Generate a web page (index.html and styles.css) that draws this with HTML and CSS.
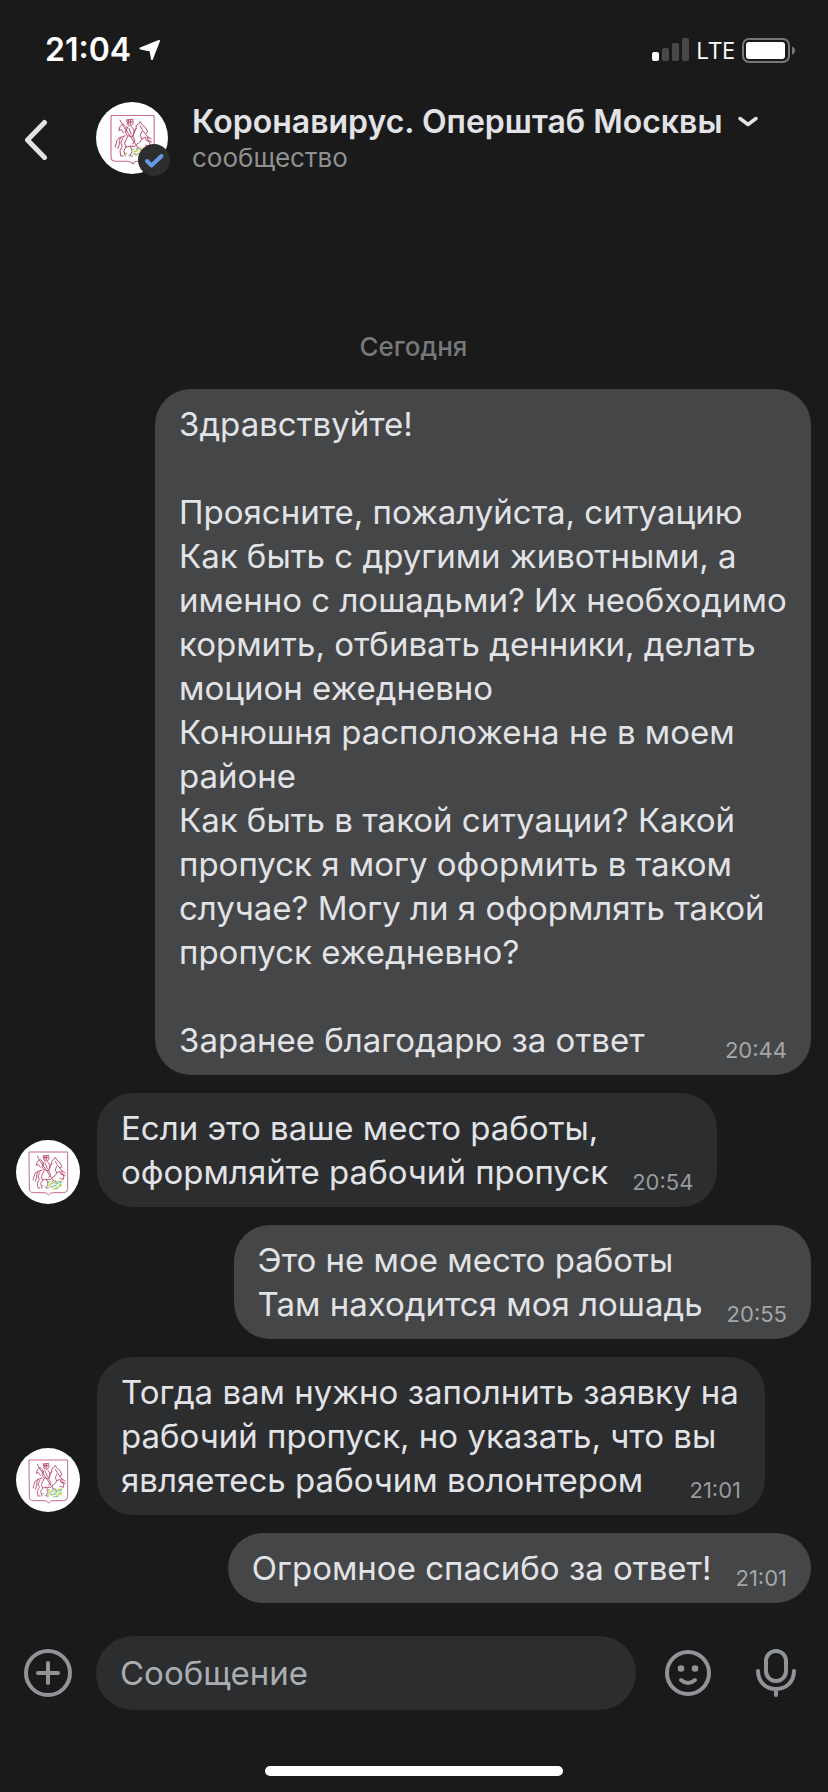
FILE: index.html
```html
<!DOCTYPE html>
<html lang="ru">
<head>
<meta charset="utf-8">
<meta name="viewport" content="width=device-width, initial-scale=1">
<title>Коронавирус. Оперштаб Москвы</title>
<link rel="stylesheet" href="styles.css">
</head>
<body>
<svg class="defs" aria-hidden="true">
  <symbol id="crest" viewBox="0 0 192 192">
    <circle cx="96" cy="96" r="96" fill="#fff"/>
    <g fill="none" stroke="#b8476f" stroke-width="2.6" stroke-linecap="round" stroke-linejoin="round">
      <path stroke="#c66a8c" stroke-width="3" d="M40 36H155V146Q155 158 143 158H112Q102 158 98 165Q93 158 84 158H52Q40 158 40 146Z"/>
      <path d="M64 48L70 60L112 122M70 60L64 66L61 76L68 74L73 82M72 58L80 66L82 78"/>
      <path d="M82 48L98 46L99 58L92 64L84 60L82 48M84 53L96 53M87 48V58M92 47V60M85 66L78 80L84 90L98 92L102 76L95 66M88 70L94 86"/>
      <path d="M98 92L106 72L108 62L114 58L118 52L122 60L132 68L138 80L132 84L124 76L118 88L122 100L114 110M102 76L108 70M118 64L123 73"/>
      <path d="M78 90L66 94Q54 98 54 110L51 120M66 94Q60 102 62 114L58 124M72 96L66 108L70 118L64 130L66 144H72M84 92L76 110L80 120L92 118L96 132L90 144H97M80 120L74 130L78 144M112 110L104 118L92 118M98 92L104 104L98 112"/>
      <path d="M122 98L132 94L134 102L144 108L142 118L132 115M130 82L138 94L147 98M138 92V102L148 106M112 122L122 126"/>
    </g>
    <g fill="none" stroke-width="4" stroke-linecap="round">
      <path stroke="#a9cf55" d="M80 137h2M102 133l6-3M108 141l5-4M118 127l4 5M127 123l5 2M127 140l4-5M113 146h5M134 132l2 5M96 126h4"/>
      <path stroke="#60c5d8" d="M88 142h3M104 138l2 3M116 138l4-3M123 130l4-2M122 146l4-2M131 128l6-3M108 124l3 3"/>
      <path stroke="#ecd65d" d="M98 137l3 2M112 129l3 2M120 141l3 1M132 141l3-3M136 120l2 4M116 122h3"/>
    </g>
  </symbol>
</svg>

<div class="status">
  <div class="status-side">
    <span class="clock">21:04</span>
    <svg class="location" viewBox="0 0 22 20" aria-hidden="true"><path d="M20 1L13 19L11.500 10.500L1.500 8.500Z" fill="#fff" stroke="#fff" stroke-width="2" stroke-linejoin="round"/></svg>
  </div>
  <div class="status-side status-right">
    <svg class="signal" viewBox="0 0 37 24" aria-hidden="true"><rect y="14" width="7" height="9" rx="2" fill="#fff"/><g fill="#484848"><rect x="10" y="10" width="7" height="13" rx="2"/><rect x="20" y="5" width="7" height="18" rx="2"/><rect x="30" width="7" height="23" rx="2"/></g></svg>
    <span class="network">LTE</span>
    <svg class="battery" viewBox="0 0 53 25" aria-hidden="true"><rect x="1" y="1" width="46" height="23" rx="6" fill="none" stroke="#777" stroke-width="2"/><rect x="4" y="4" width="39" height="17" rx="3" fill="#fff"/><path d="M50 8.500Q53 9.500 53 12.500Q53 15.500 50 16.500Z" fill="#777"/></svg>
  </div>
</div>

<header class="header">
  <button class="icon-button back" type="button" aria-label="Назад"><svg viewBox="0 0 24 44" aria-hidden="true"><path d="M20.500 6.500L3.500 24L20.500 41.500" fill="none" stroke="#e1e3e6" stroke-width="5" stroke-linecap="round" stroke-linejoin="round"/></svg></button>
  <div class="profile-picture">
    <svg class="avatar-large" role="img" aria-label="Герб Москвы"><use href="#crest"/></svg>
    <svg class="badge" viewBox="0 0 32 32" aria-hidden="true"><circle cx="16" cy="16" r="16" fill="#2c2d2e"/><path d="M9 17L13.500 21.500L23.500 12" fill="none" stroke="#6798e0" stroke-width="4" stroke-linecap="round" stroke-linejoin="round"/></svg>
  </div>
  <div class="heading">
    <h1 class="title"><button class="title-button" type="button">Коронавирус. Оперштаб Москвы<svg class="chevron" viewBox="0 0 20 12" aria-hidden="true"><path d="M2 2.500L10 8.500L18 2.500" fill="none" stroke="#e1e3e6" stroke-width="3.500" stroke-linecap="round" stroke-linejoin="round"/></svg></button></h1>
    <p class="subtitle">сообщество</p>
  </div>
</header>

<main class="chat">
  <p class="date">Сегодня</p>
  <div class="row outgoing">
    <p class="bubble">Здравствуйте!<br><br>Проясните, пожалуйста, ситуацию<br>Как быть с другими животными, а именно с лошадьми? Их необходимо кормить, отбивать денники, делать моцион ежедневно<br>Конюшня расположена не в моем районе<br>Как быть в такой ситуации? Какой пропуск я могу оформить в таком случае? Могу ли я оформлять такой пропуск ежедневно?<br><br>Заранее благодарю за ответ<time class="time">20:44</time></p>
  </div>
  <div class="row">
    <svg class="avatar" aria-hidden="true"><use href="#crest"/></svg>
    <p class="bubble">Если это ваше место работы,<br>оформляйте рабочий пропуск<time class="time">20:54</time></p>
  </div>
  <div class="row outgoing">
    <p class="bubble">Это не мое место работы<br>Там находится моя лошадь<time class="time">20:55</time></p>
  </div>
  <div class="row">
    <svg class="avatar" aria-hidden="true"><use href="#crest"/></svg>
    <p class="bubble">Тогда вам нужно заполнить заявку на рабочий пропуск, но указать, что вы являетесь рабочим волонтером<time class="time">21:01</time></p>
  </div>
  <div class="row outgoing">
    <p class="bubble">Огромное спасибо за ответ!<time class="time">21:01</time></p>
  </div>
</main>

<form class="composer">
  <button class="icon-button" type="button" aria-label="Прикрепить"><svg viewBox="0 0 48 48" aria-hidden="true"><g fill="none" stroke="#909499" stroke-width="4" stroke-linecap="round"><circle cx="24" cy="24" r="22"/><path d="M24 14V34M14 24H34"/></g></svg></button>
  <input class="message-input" type="text" placeholder="Сообщение" aria-label="Сообщение">
  <button class="icon-button" type="button" aria-label="Эмодзи"><svg viewBox="0 0 48 48" aria-hidden="true"><g fill="none" stroke="#909499" stroke-width="4" stroke-linecap="round"><circle cx="24" cy="24" r="21"/><path d="M17 31Q24 37 31 31"/></g><circle cx="17" cy="19.500" r="3.300" fill="#909499"/><circle cx="31" cy="19.500" r="3.300" fill="#909499"/></svg></button>
  <button class="icon-button" type="button" aria-label="Голосовое сообщение"><svg viewBox="0 0 48 48" aria-hidden="true"><g fill="none" stroke="#909499" stroke-width="4" stroke-linecap="round"><rect x="14" y="2" width="20" height="30" rx="10"/><path d="M6 22C6 33 14 40 24 40S42 33 42 22M24 40V46"/></g></svg></button>
</form>
<div class="home"></div>
</body>
</html>
```
FILE: styles.css
```css
* {
  box-sizing: border-box;
}

body {
  margin: 0;
  min-height: 100vh;
  display: flex;
  flex-direction: column;
  background: #1a1a1a;
  color: #e1e3e6;
  font-family: Inter, "Noto Sans", sans-serif;
}

p,
h1 {
  margin: 0;
}

button {
  padding: 0;
  border: 0;
  background: none;
  color: inherit;
  font: inherit;
}

svg {
  display: block;
  flex: none;
}

.defs {
  position: absolute;
  width: 0;
  height: 0;
}

.status {
  display: flex;
  justify-content: space-between;
  padding: 30px 33px 0 45px;
  color: #fff;
}

.status-side {
  display: flex;
  align-items: center;
  height: 40px;
  gap: 8px;
}

.status-right {
  gap: 7px;
}

.clock {
  font-size: 32px;
  font-weight: 600;
  line-height: 40px;
}

.location {
  width: 22px;
  height: 20px;
}

.signal {
  width: 37px;
  height: 24px;
}

.network {
  font-family: "Open Sans", sans-serif;
  font-size: 24px;
  font-weight: 500;
  line-height: 32px;
}

.battery {
  width: 53px;
  height: 25px;
}

.header {
  display: flex;
  align-items: center;
  padding: 32px 24px 20px;
}

.icon-button {
  flex: none;
  width: 48px;
  height: 48px;
}

.icon-button svg {
  width: 100%;
  height: 100%;
}

.back svg {
  width: 24px;
  height: 44px;
}

.profile-picture {
  position: relative;
  margin: 0 24px;
}

.avatar-large {
  width: 72px;
  height: 72px;
}

.badge {
  position: absolute;
  right: -2px;
  bottom: -2px;
  width: 32px;
  height: 32px;
}

.heading {
  min-width: 0;
}

.title {
  font-size: 32px;
  font-weight: 600;
  line-height: 40px;
}

.title-button {
  display: flex;
  align-items: center;
  gap: 16px;
  text-align: left;
}

.chevron {
  width: 20px;
  height: 12px;
}

.subtitle {
  color: #909090;
  font-size: 26px;
  line-height: 32px;
}

.chat {
  flex: 1;
  display: flex;
  flex-direction: column;
  justify-content: flex-end;
  gap: 18px;
  padding: 0 17px 33px 16px;
}

.date {
  padding-bottom: 8px;
  color: #76787a;
  font-size: 26px;
  font-weight: 500;
  line-height: 32px;
  text-align: center;
}

.row {
  display: flex;
  align-items: flex-end;
  gap: 17px;
}

.outgoing {
  justify-content: flex-end;
}

.avatar {
  width: 64px;
  height: 64px;
  margin-bottom: 3px;
}

.bubble {
  display: flow-root;
  max-width: 668px;
  padding: 13px 24px;
  border-radius: 36px;
  background: #2c2d2e;
  font-size: 33px;
  line-height: 44px;
}

.outgoing .bubble {
  max-width: 656px;
  background: #454647;
}

.time {
  float: right;
  margin: 20px 0 0 24px;
  color: #999a9c;
  font-size: 22px;
  line-height: 24px;
}

.outgoing .time {
  color: #a5a6a8;
}

.composer {
  display: flex;
  align-items: center;
  gap: 24px;
  padding: 0 28px 56px 24px;
}

.composer .icon-button:last-child {
  margin-left: 16px;
}

.message-input {
  flex: 1;
  min-width: 0;
  height: 74px;
  margin-right: 4px;
  padding: 0 24px;
  border: 0;
  border-radius: 37px;
  background: #2c2d2e;
  color: #e1e3e6;
  font-family: inherit;
  font-size: 33px;
}

.message-input::placeholder {
  color: #aaaeb3;
  opacity: 1;
}

.home {
  width: 36%;
  height: 10px;
  margin: 0 auto 16px;
  border-radius: 5px;
  background: #fff;
}
```
